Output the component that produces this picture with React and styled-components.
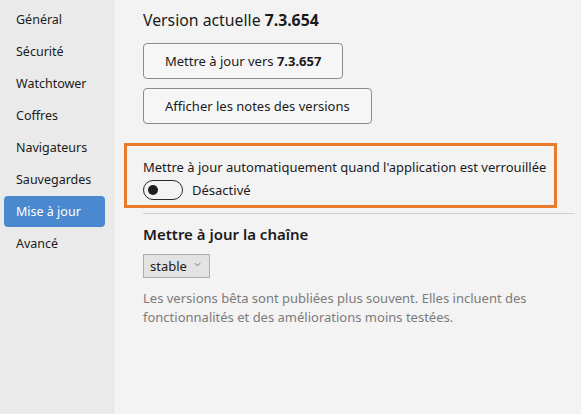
import styled, { createGlobalStyle } from 'styled-components';

const GlobalStyle = createGlobalStyle`
	html, body {
		margin: 0;
		padding: 0;
		background: #f3f3f3;
	}
	body {
		font-family: 'Noto Sans', 'Open Sans', sans-serif;
		color: #1b1b1b;
	}
`;

const navItems = ['Général', 'Sécurité', 'Watchtower', 'Coffres', 'Navigateurs', 'Sauvegardes', 'Mise à jour', 'Avancé'];

export default function App() {
	return (
		<>
			<GlobalStyle />
			<Layout>
				<Sidebar>
					{navItems.map((item) => (
						<NavItem key={item} $active={item === 'Mise à jour'}>
							{item}
						</NavItem>
					))}
				</Sidebar>
				<Main>
					<Version>
						Version actuelle <b>7.3.654</b>
					</Version>
					<Button>
						Mettre à jour vers <b>7.3.657</b>
					</Button>
					<Button>Afficher les notes des versions</Button>
					<Highlight>
						<Label>Mettre à jour automatiquement quand l'application est verrouillée</Label>
						<ToggleRow>
							<Toggle>
								<Knob />
							</Toggle>
							<span>Désactivé</span>
						</ToggleRow>
					</Highlight>
					<Divider />
					<Heading>Mettre à jour la chaîne</Heading>
					<Select>
						stable
						<Chevron viewBox="0 0 8 5">
							<path d="M1 1l3 3 3-3" fill="none" stroke="#666" strokeWidth="1" />
						</Chevron>
					</Select>
					<Help>
						Les versions bêta sont publiées plus souvent. Elles incluent des fonctionnalités et des améliorations moins testées.
					</Help>
				</Main>
			</Layout>
		</>
	);
}

const Layout = styled.div`
	display: flex;
	height: 414px;
	overflow: hidden;
`;

const Sidebar = styled.nav`
	width: 114px;
	flex-shrink: 0;
	box-sizing: border-box;
	padding: 4px 8px 0 4px;
	background: #eaeaea;
	border-right: 1px solid #e2e2e2;
	display: flex;
	flex-direction: column;
`;

const NavItem = styled.div`
	height: 31px;
	margin-bottom: 1px;
	display: flex;
	align-items: center;
	padding-left: 12px;
	border-radius: 4px;
	font-size: 12.5px;
	color: ${(props) => (props.$active ? '#ffffff' : '#1b1b1b')};
	background: ${(props) => (props.$active ? '#4a89d0' : 'transparent')};
`;

const Main = styled.main`
	flex: 1;
	box-sizing: border-box;
	padding: 9px 6px 0 29px;
	display: flex;
	flex-direction: column;
	align-items: flex-start;
`;

const Version = styled.div`
	font-size: 15.8px;
	line-height: 22px;
	margin-bottom: 12px;

	b {
		font-weight: 700;
	}
`;

const Button = styled.button`
	height: 36px;
	box-sizing: border-box;
	padding: 0 21px;
	margin-bottom: 9px;
	font-family: inherit;
	font-size: 13px;
	color: #1b1b1b;
	background: #f6f6f6;
	border: 1px solid #8c8c8c;
	border-radius: 4px;

	b {
		font-weight: 700;
	}
`;

const Highlight = styled.section`
	align-self: stretch;
	margin: 10px 18px 0 -19px;
	padding: 11px 0 5px 16px;
	border: 3px solid #ea7b2a;
	display: flex;
	flex-direction: column;
	gap: 3px;
`;

const Label = styled.div`
	font-size: 13px;
	line-height: 20px;
	white-space: nowrap;
`;

const ToggleRow = styled.div`
	display: flex;
	align-items: center;
	gap: 9px;
	font-size: 13px;
	line-height: 20px;
`;

const Toggle = styled.div`
	width: 40px;
	height: 20px;
	box-sizing: border-box;
	border: 1.5px solid #2a2a2a;
	border-radius: 10px;
	display: flex;
	align-items: center;
	padding-left: 4px;
`;

const Knob = styled.div`
	width: 10px;
	height: 10px;
	border-radius: 50%;
	background: #1e1e1e;
`;

const Divider = styled.hr`
	align-self: stretch;
	margin: 5px 0 0 0;
	border: none;
	border-top: 1px solid #cfcfcf;
`;

const Heading = styled.h2`
	margin: 9px 0 9px;
	font-size: 15px;
	line-height: 22px;
	font-weight: 600;
`;

const Select = styled.div`
	height: 24px;
	box-sizing: border-box;
	padding: 0 8px 0 6px;
	display: flex;
	align-items: center;
	gap: 7px;
	font-size: 13px;
	background: #e3e3e3;
	border: 1px solid #adadad;
`;

const Chevron = styled.svg`
	width: 7px;
	height: 5px;
	margin-bottom: 4px;
`;

const Help = styled.p`
	margin: 11px 0 0;
	max-width: 410px;
	font-size: 13px;
	line-height: 19px;
	color: #7b7b7b;
`;
